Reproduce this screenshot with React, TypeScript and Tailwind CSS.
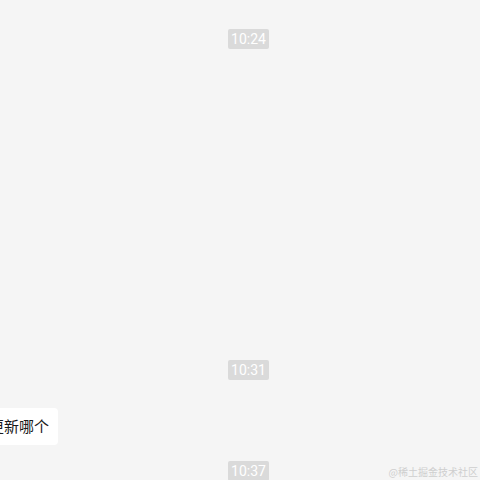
import React from 'react';

function TimeBadge({ time }: { time: string }) {
  return (
    <div className="ml-[17px] h-[20px] px-[3px] rounded-[2px] bg-[#dadada] text-white text-[14px] leading-[20px] font-[Roboto,'Noto_Sans_CJK_SC',sans-serif]">
      {time}
    </div>
  );
}

export default function App() {
  return (
    <div className="relative w-[480px] h-[480px] overflow-hidden bg-[#f5f5f5] font-['Noto_Sans_CJK_SC',sans-serif]">
      <div className="flex flex-col items-center pt-[29px]">
        <TimeBadge time="10:24" />
        <div className="h-[311px]" />
        <TimeBadge time="10:31" />
        <div className="self-start -ml-[21px] mt-[28px] h-[37px] pl-[10px] pr-[9px] bg-white rounded-[4px] flex items-center text-[15px] text-[#1a1a1a]">
          更新哪个
        </div>
        <div className="mt-[16px]">
          <TimeBadge time="10:37" />
        </div>
      </div>
      <div className="absolute right-[2px] bottom-[3px] text-[10px] text-[#cfcfcf] leading-none">
        @稀土掘金技术社区
      </div>
    </div>
  );
}
